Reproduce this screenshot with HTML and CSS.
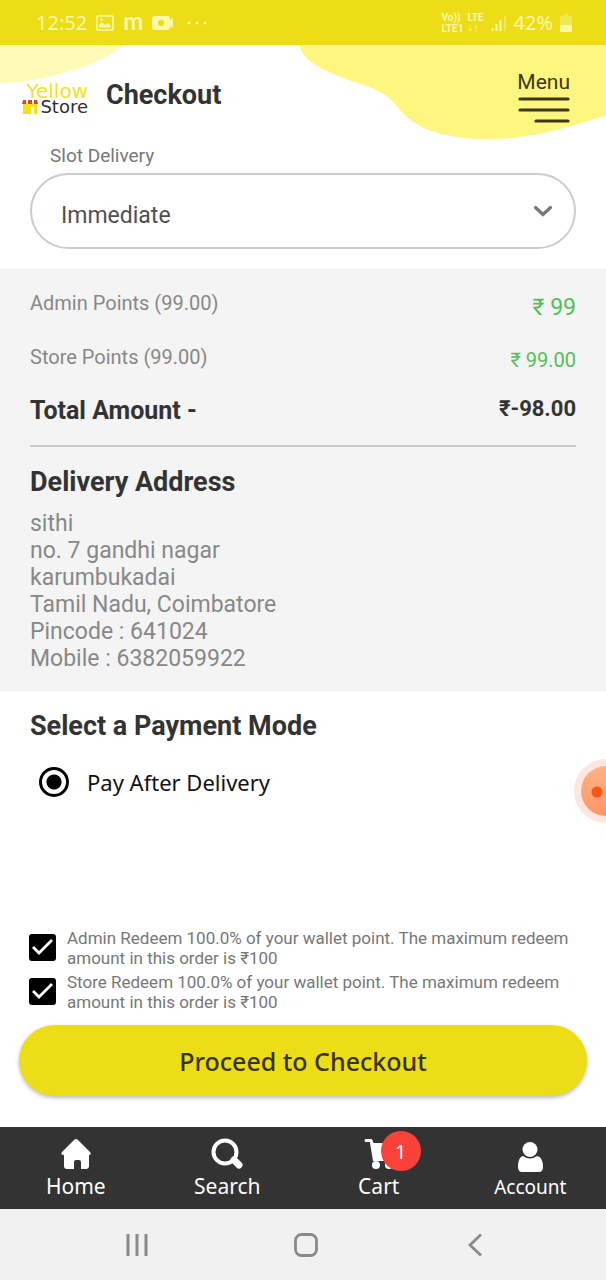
FILE: index.html
```html
<!DOCTYPE html>
<html lang="en">
<head>
<meta charset="utf-8">
<meta name="viewport" content="width=device-width, initial-scale=1">
<title>Checkout</title>
<link rel="stylesheet" href="styles.css">
</head>
<body>
<div class="status">
  <div class="status-left">
    <span class="clock">12:52</span>
    <svg width="18" height="16" viewBox="0 0 18 16" aria-hidden="true"><rect x="1" y="1" width="16" height="14" rx="1" fill="none" stroke="currentColor" stroke-width="1.6"/><path d="M3 12.500V10l3-3 3 3 3-2 3 3v1.500z" fill="currentColor"/><circle cx="5.500" cy="4.500" r="1.200" fill="currentColor"/></svg>
    <span class="app-m">m</span>
    <svg width="22" height="16" viewBox="0 0 22 16" aria-hidden="true"><path fill-rule="evenodd" d="M3 1h12a3 3 0 0 1 3 3v1l3-2v10l-3-2v1a3 3 0 0 1-3 3H3a3 3 0 0 1-3-3V4a3 3 0 0 1 3-3zm6 4a3 3 0 1 0 0 6 3 3 0 0 0 0-6z" fill="currentColor"/></svg>
    <svg class="dots" width="20" height="4" viewBox="0 0 20 4" aria-hidden="true"><g fill="currentColor"><circle cx="2" cy="2" r="1.500"/><circle cx="10" cy="2" r="1.500"/><circle cx="18" cy="2" r="1.500"/></g></svg>
  </div>
  <div class="status-right">
    <span class="volte"><span>Vo))</span><span>LTE</span><span>LTE1</span>
      <svg width="12" height="7" viewBox="0 0 12 7" aria-hidden="true"><path d="M3 0v6M1 4l2 2 2-2M9 7V1M7 3l2-2 2 2" fill="none" stroke="currentColor" opacity=".5"/></svg></span>
    <svg width="16" height="16" viewBox="0 0 16 16" aria-hidden="true"><path d="M1.500 16v-3M5.500 16V9M9.500 16V5" stroke="currentColor" stroke-width="2"/><path d="M14 16V1" stroke="currentColor" stroke-width="2" opacity=".4"/></svg>
    <span class="battery-text">42%</span>
    <svg width="12" height="18" viewBox="0 0 12 18" aria-hidden="true"><path d="M3.500 0h5v2H11a1 1 0 0 1 1 1v8H0V3a1 1 0 0 1 1-1h2.500z" fill="currentColor" opacity=".4"/><path d="M0 11h12v6a1 1 0 0 1-1 1H1a1 1 0 0 1-1-1z" fill="currentColor"/></svg>
  </div>
</div>

<header class="header">
  <svg class="blob blob-left" width="122" height="39" viewBox="0 0 122 39" aria-hidden="true"><path d="M0 0H122C112 12 89 21 60 29C38 35 17 38 0 38z" fill="#fefab8"/></svg>
  <svg class="blob blob-right" width="306" height="96" viewBox="0 0 306 96" aria-hidden="true"><path d="M0 0H306V71C289 75 274 81 252 86C229 92 204 95 176 94C148 92 127 87 112 76C98 66 94 54 80 47C68 40 50 37 29 27C14 20 1 12 0 0z" fill="#fef67f"/></svg>
  <div class="logo">
    <span class="logo-yellow">Yellow</span>
    <span class="logo-store"><svg width="16" height="14" viewBox="0 0 16 14" aria-hidden="true"><path d="M1 3h14v11h-3V7H9v7H1z" fill="#fadf15"/><path d="M1 0h3v4H0zM6 0h4v4H6zM12 0h3l1 4h-4z" fill="#d9442c"/></svg>Store</span>
  </div>
  <h1 class="title">Checkout</h1>
  <button class="menu" type="button">Menu
    <svg width="52" height="28" viewBox="0 0 52 28" aria-hidden="true"><path d="M2 3h48M2 14h48M18 25h32" stroke="#3a3719" stroke-width="3.200" stroke-linecap="round"/></svg>
  </button>
</header>

<main class="main">
  <div class="slot">
    <label class="slot-label" for="slot">Slot Delivery</label>
    <div class="select-wrap">
      <select class="select" id="slot"><option>Immediate</option></select>
      <svg class="chevron" width="20" height="12" viewBox="0 0 20 12" aria-hidden="true"><path d="M2.500 2.500 10 9.500l7.500-7" fill="none" stroke="#777" stroke-width="3.200" stroke-linecap="round"/></svg>
    </div>
  </div>

  <section class="summary">
    <div class="row"><span class="muted">Admin Points (99.00)</span><span class="green large">₹ 99</span></div>
    <div class="row"><span class="muted">Store Points (99.00)</span><span class="green">₹ 99.00</span></div>
    <div class="row total"><span>Total Amount -</span><span class="amount">₹-98.00</span></div>
    <hr class="rule">
    <h2 class="heading">Delivery Address</h2>
    <address class="address">sithi<br>no. 7 gandhi nagar<br>karumbukadai<br>Tamil Nadu, Coimbatore<br>Pincode : 641024<br>Mobile : 6382059922</address>
  </section>

  <section class="payment">
    <h2 class="heading">Select a Payment Mode</h2>
    <label class="pay"><input class="radio" type="radio" name="pay" checked>Pay After Delivery</label>
    <button class="float" type="button" aria-label="Record"><svg width="32" height="64" viewBox="0 0 32 64"><defs><linearGradient id="peach" x1="0" y1="0" x2="0" y2="1"><stop offset="0" stop-color="#fdb187"/><stop offset="1" stop-color="#fd9668"/></linearGradient></defs><circle cx="32" cy="32" r="32" fill="#fde6dd"/><circle cx="32" cy="32" r="25" fill="url(#peach)"/><circle cx="23" cy="33" r="5.500" fill="#fd5412"/></svg></button>
  </section>

  <form class="redeem">
    <label class="check"><input class="box" type="checkbox" checked><span>Admin Redeem 100.0% of your wallet point. The maximum redeem amount in this order is ₹100</span></label>
    <label class="check"><input class="box" type="checkbox" checked><span>Store Redeem 100.0% of your wallet point. The maximum redeem amount in this order is ₹100</span></label>
    <button class="proceed" type="button">Proceed to Checkout</button>
  </form>
</main>

<nav class="nav">
  <a class="tab" href="#home"><svg width="32" height="32" viewBox="0 0 32 32" aria-hidden="true"><path d="M14.500 1.500q1.500-1.200 3 0L30 14q2 2.500-1 3v11q0 3-3 3h-5v-7q0-2-2-2h-3q-2 0-2 2v7H7q-3 0-3-3V17q-4 0-2-3z" fill="#fff"/></svg>Home</a>
  <a class="tab" href="#search"><svg width="32" height="32" viewBox="0 0 32 32" aria-hidden="true"><circle cx="14" cy="14" r="11.500" fill="none" stroke="#fff" stroke-width="4"/><path d="m23 22 5 5" stroke="#fff" stroke-width="7" stroke-linecap="round"/></svg>Search</a>
  <a class="tab" href="#cart"><svg width="32" height="32" viewBox="0 0 32 32" aria-hidden="true"><path d="M3 2.500h5L10 8" fill="none" stroke="#fff" stroke-width="3" stroke-linecap="round" stroke-linejoin="round"/><path d="M7 5h24l-2 18H10z" fill="#fff"/><circle cx="13" cy="27" r="4" fill="#fff"/><circle cx="26" cy="27" r="4" fill="#fff"/></svg>Cart<span class="badge">1</span></a>
  <a class="tab account" href="#account"><svg width="32" height="32" viewBox="0 0 32 32" aria-hidden="true"><circle cx="16" cy="8.500" r="7.500" fill="#fff"/><path d="M9 15q7 5 14 0 6 1 6 11 0 5-4 5H8q-4 0-4-5 0-10 5-11z" fill="#fff"/></svg>Account</a>
</nav>

<div class="system">
  <button class="sys" type="button" aria-label="Recent apps"><svg width="26" height="26" viewBox="0 0 26 26"><path d="M4 2v22M13 2v22M22 2v22" stroke="#8a8a8a" stroke-width="3"/></svg></button>
  <button class="sys" type="button" aria-label="Home screen"><svg width="26" height="26" viewBox="0 0 26 26"><rect x="2.500" y="2.500" width="21" height="21" rx="6" fill="none" stroke="#8a8a8a" stroke-width="2.800"/></svg></button>
  <button class="sys" type="button" aria-label="Back"><svg width="26" height="26" viewBox="0 0 26 26"><path d="M19 2.500 8 13l11 10.500" fill="none" stroke="#8a8a8a" stroke-width="2.800"/></svg></button>
</div>
</body>
</html>
```
FILE: styles.css
```css
* { box-sizing: border-box; }

body {
  margin: 0;
  min-height: 100vh;
  display: flex;
  flex-direction: column;
  background: #fff;
  color: #333;
  font-family: Roboto, "Noto Sans", sans-serif;
}

h1, h2 { margin: 0; }
button { border: 0; padding: 0; background: none; font: inherit; color: inherit; }

.status {
  height: 45px;
  padding: 0 34px 0 36px;
  display: flex;
  justify-content: space-between;
  align-items: center;
  background: #ecdd16;
  color: #fdf8a8;
  font-family: "Noto Sans", sans-serif;
  font-size: 20px;
}
.status-left, .status-right { display: flex; align-items: center; }
.status-left { gap: 9px; }
.app-m { font: 700 24px/24px Lato, sans-serif; padding-bottom: 4px; }
.dots { margin-left: 4px; }
.status-right { gap: 7px; }
.volte {
  display: grid;
  grid-template-columns: auto auto;
  column-gap: 4px;
  align-items: center;
  font: 700 10px/11px Roboto, sans-serif;
}

.header {
  position: relative;
  height: 100px;
  padding: 0 36px 0 20px;
  display: flex;
  align-items: center;
}
.blob { position: absolute; top: 0; }
.blob-left { left: 0; }
.blob-right { right: 0; }
.logo {
  position: relative;
  width: 68px;
  margin-top: 8px;
  display: flex;
  flex-direction: column;
  align-items: flex-end;
  font: 18px/16px "DejaVu Sans", sans-serif;
}
.logo-yellow { font-size: 20px; color: #f2e21d; }
.logo-store { display: flex; align-items: center; gap: 2px; color: #302f32; }
.title { flex: 1; margin-left: 18px; font-size: 27px; line-height: 32px; font-weight: 700; }
.menu {
  position: relative;
  display: flex;
  flex-direction: column;
  align-items: center;
  gap: 2px;
  margin-top: 4px;
  font-size: 21px;
  line-height: 24px;
  font-weight: 400;
  color: #3a3719;
}

.main { flex: 1; display: flex; flex-direction: column; }

.slot { padding: 0 30px 20px; }
.slot-label { display: block; padding-left: 20px; margin-bottom: 6px; font-size: 19px; line-height: 22px; color: #777; }
.select-wrap { position: relative; }
.select {
  appearance: none;
  display: block;
  width: 100%;
  height: 76px;
  padding: 8px 60px 0 29px;
  border: 2px solid #ccc;
  border-radius: 38px;
  background: #fff;
  color: #505050;
  font: 23px Roboto, sans-serif;
}
.chevron { position: absolute; right: 23px; top: 32px; pointer-events: none; }

.summary { padding: 20px 30px 19px; background: #f4f4f4; }
.row { display: flex; justify-content: space-between; height: 54px; font-size: 20px; line-height: 28px; }
.muted { color: #888; }
.green { padding-top: 3px; color: #57bd5a; }
.large { padding-top: 5px; font-size: 23px; }
.total { height: 48px; font-size: 25px; font-weight: 700; }
.amount { font-size: 22px; line-height: 24px; }
.rule { height: 2px; margin: 0; border: 0; background: #ccc; }
.heading { font-size: 27px; line-height: 32px; font-weight: 700; }
.summary .heading { margin-top: 19px; }
.address { margin-top: 12px; font-size: 23px; line-height: 27px; font-style: normal; color: #888; }

.payment { position: relative; padding: 19px 30px; }
.pay {
  display: flex;
  align-items: center;
  gap: 18px;
  margin-top: 24px;
  padding-left: 9px;
  font: 22px/32px "Noto Sans", sans-serif;
  color: #111;
}
.radio {
  appearance: none;
  width: 30px;
  height: 30px;
  margin: 0;
  border: 3px solid #000;
  border-radius: 50%;
  background: radial-gradient(circle, #000 7px, #fff 8px);
}
.float { position: absolute; right: 0; top: 68px; display: flex; }

.redeem { margin-top: auto; padding: 0 19px 31px; }
.check { display: flex; gap: 11px; padding: 0 0 0 10px; margin-bottom: 4px; font-size: 17px; line-height: 20px; color: #777; }
.box {
  flex: none;
  appearance: none;
  width: 27px;
  height: 27px;
  margin: 6px 0 0;
  border-radius: 3px;
  background: #000 url("data:image/svg+xml,%3Csvg xmlns='http://www.w3.org/2000/svg' viewBox='0 0 27 27'%3E%3Cpath d='M4 13l6 6L23 6' fill='none' stroke='white' stroke-width='2.800'/%3E%3C/svg%3E");
}
.proceed {
  width: 100%;
  height: 71px;
  margin-top: 9px;
  border-radius: 36px;
  background: #ecdd16;
  box-shadow: 0 2px 4px #bbb;
  color: #383413;
  font: 500 25px "Noto Sans", sans-serif;
}

.nav {
  height: 82px;
  display: grid;
  grid-template-columns: repeat(4, 1fr);
  background: #333;
  font-family: "Noto Sans", sans-serif;
}
.tab {
  position: relative;
  display: flex;
  flex-direction: column;
  align-items: center;
  padding-top: 11px;
  color: #fff;
  font-size: 21px;
  line-height: 32px;
  text-decoration: none;
}
.account { padding-top: 14px; font-size: 19px; line-height: 29px; }
.badge {
  position: absolute;
  left: 50%;
  top: 4px;
  width: 40px;
  height: 40px;
  margin-left: 2px;
  border-radius: 50%;
  background: #f9423a;
  font-size: 20px;
  line-height: 42px;
  text-align: center;
}

.system {
  height: 71px;
  padding: 0 46px 0 52px;
  display: grid;
  grid-template-columns: repeat(3, 1fr);
  align-items: center;
  background: #f1f1f1;
}
.sys { display: flex; justify-content: center; }
```
